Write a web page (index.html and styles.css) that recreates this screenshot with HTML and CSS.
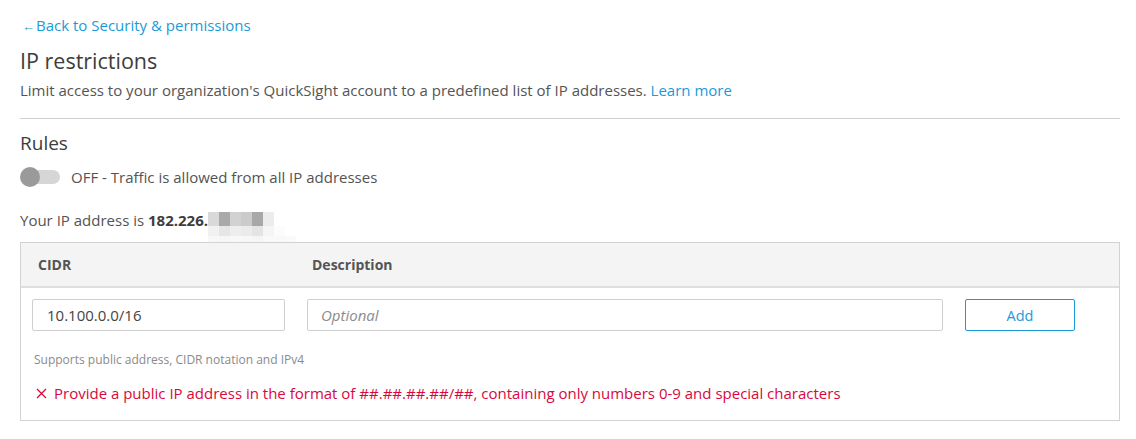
FILE: index.html
```html
<!DOCTYPE html>
<html>
<head>
<meta charset="utf-8">
<link rel="stylesheet" href="styles.css">
</head>
<body>
<div class="page">
  <a class="back" href="#"><span class="arrow">←</span>Back to Security &amp; permissions</a>
  <h1 class="title">IP restrictions</h1>
  <p class="desc">Limit access to your organization's QuickSight account to a predefined list of IP addresses. <a class="link" href="#">Learn more</a></p>
  <hr class="divider">
  <h2 class="rules">Rules</h2>
  <div class="toggle-row">
    <span class="toggle"><span class="track"></span><span class="knob"></span></span>
    <span class="toggle-label">OFF - Traffic is allowed from all IP addresses</span>
  </div>
  <div class="ip">Your IP address is <b>182.226.</b><span class="blur">
      <i style="background:#d9d9d9"></i><i style="background:#a9a9a9"></i><i style="background:#d2d2d2"></i><i style="background:#cbcbcb"></i><i style="background:#a8a8a8"></i><i style="background:#ececec"></i><i style="background:#fff"></i><i style="background:#fff"></i>
      <i style="background:#f1f1f1"></i><i style="background:#e6e6e6"></i><i style="background:#eeeeee"></i><i style="background:#ebebeb"></i><i style="background:#e4e4e4"></i><i style="background:#f5f5f5"></i><i style="background:#fcfcfc"></i><i style="background:#fff"></i>
      <i style="background:#f8f8f8"></i><i style="background:#f6f6f6"></i><i style="background:#f8f8f8"></i><i style="background:#f7f7f7"></i><i style="background:#f5f5f5"></i><i style="background:#f9f9f9"></i><i style="background:#f9f9f9"></i><i style="background:#fafafa"></i>
    </span></div>
  <div class="table">
    <div class="thead">
      <div class="th th-cidr">CIDR</div>
      <div class="th th-desc">Description</div>
      <div></div>
    </div>
    <div class="tbody">
      <div class="row">
        <input class="input" type="text" value="10.100.0.0/16">
        <input class="input input-desc" type="text" placeholder="Optional">
        <button class="btn">Add</button>
      </div>
      <div class="help">Supports public address, CIDR notation and IPv4</div>
      <div class="error"><svg class="x" width="11" height="11" viewBox="0 0 11 11"><path d="M1 1L10 10M10 1L1 10" stroke="#d9073d" stroke-width="1.3" fill="none"/></svg>Provide a public IP address in the format of ##.##.##.##/##, containing only numbers 0-9 and special characters</div>
    </div>
  </div>
</div>
</body>
</html>
```
FILE: styles.css
```css
* { box-sizing: border-box; }
html, body { margin: 0; padding: 0; background: #fff; }
body {
  font-family: "Open Sans", "Roboto", "Liberation Sans", sans-serif;
  font-size: 15px;
  color: #545454;
}
.page {
  width: 1120px;
  padding: 15px 0 0 20px;
  display: flex;
  flex-direction: column;
}
.back {
  color: #1a9bd8;
  text-decoration: none;
  line-height: 20px;
  height: 20px;
  font-size: 15px;
  align-self: flex-start;
  margin-left: 2px;
}
.arrow { font-size: 13px; margin-right: 1px; }
.title {
  margin: 12px 0 0;
  font-size: 21.5px;
  font-weight: 400;
  line-height: 28px;
  height: 28px;
  color: #3d3d3d;
}
.desc {
  margin: 5px 0 0;
  line-height: 20px;
  height: 20px;
  color: #545454;
}
.link { color: #1a9bd8; text-decoration: none; }
.divider {
  margin: 18px 0 0;
  border: 0;
  border-top: 1px solid #cfcfcf;
  height: 0;
}
.rules {
  margin: 12px 0 0;
  font-size: 19px;
  font-weight: 400;
  line-height: 24px;
  height: 24px;
  color: #3d3d3d;
}
.toggle-row {
  margin-top: 12px;
  display: flex;
  align-items: center;
  height: 20px;
}
.toggle {
  position: relative;
  width: 40px;
  height: 20px;
  flex: none;
}
.track {
  position: absolute;
  left: 8px;
  top: 3px;
  width: 32px;
  height: 14px;
  border-radius: 7px;
  background: #d6d6d6;
}
.knob {
  position: absolute;
  left: 0;
  top: 0;
  width: 20px;
  height: 20px;
  border-radius: 50%;
  background: #9a9a9a;
}
.toggle-label { margin-left: 11px; line-height: 20px; color: #545454; }
.ip {
  margin-top: 23px;
  line-height: 20px;
  height: 20px;
  color: #545454;
}
.ip b { color: #3d3d3d; font-weight: 700; }
.blur {
  display: inline-grid;
  grid-template-columns: repeat(8, 11px);
  grid-template-rows: 14px 10px 6px;
  vertical-align: top;
  margin-top: 2px;
}
.blur i { display: block; }
.table {
  margin-top: 12px;
  border: 1px solid #d2d2d2;
  width: 1100px;
}
.thead {
  background: #f4f4f4;
  border-bottom: 2px solid #dedede;
  height: 45px;
  display: grid;
  grid-template-columns: 253px 636px 110px;
  column-gap: 22px;
  padding: 0 11px;
  align-items: center;
}
.th {
  font-weight: 700;
  font-size: 14px;
  color: #545454;
  line-height: 20px;
}
.th-cidr { padding-left: 6px; }
.th-desc { padding-left: 5px; }
.tbody {
  padding: 11px 11px 17px;
  display: flex;
  flex-direction: column;
}
.row {
  display: grid;
  grid-template-columns: 253px 636px 110px;
  column-gap: 22px;
  height: 32px;
}
.input {
  height: 32px;
  border: 1px solid #cfcfcf;
  border-radius: 2px;
  padding: 0 14px;
  font: inherit;
  font-size: 15px;
  color: #444;
  outline: none;
  background: #fff;
}
.input-desc { padding-left: 13px; }
.input-desc::placeholder { color: #8c8c8c; font-style: italic; }
.btn {
  height: 32px;
  border: 1px solid #1a9bd8;
  border-radius: 2px;
  background: #fff;
  color: #1a9bd8;
  font: inherit;
  font-size: 14.5px;
  cursor: pointer;
}
.help {
  margin-top: 21px;
  margin-left: 2px;
  font-size: 12px;
  line-height: 16px;
  height: 16px;
  color: #8a8a8a;
}
.error {
  margin-top: 15px;
  margin-left: 4px;
  line-height: 20px;
  height: 20px;
  color: #d9073d;
  display: flex;
  align-items: center;
}
.x { margin-right: 7px; flex: none; }
```
